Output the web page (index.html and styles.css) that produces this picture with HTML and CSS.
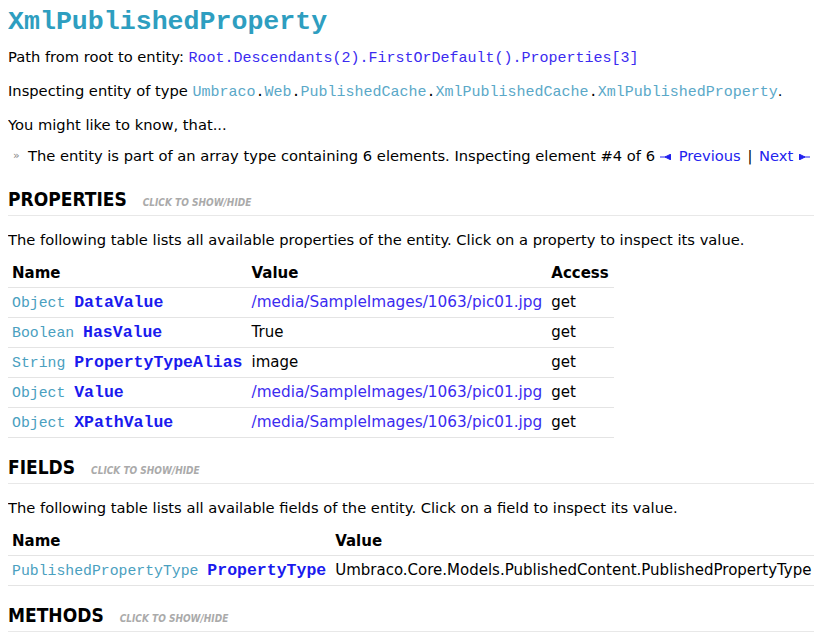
FILE: index.html
```html
<!DOCTYPE html>
<html lang="en">
<head>
  <meta charset="UTF-8" />
  <title>XmlPublishedProperty</title>
  <link rel="stylesheet" href="styles.css">
</head>
<body>
  <h1 class="entity-title">XmlPublishedProperty</h1>

  <p>Path from root to entity: <span class="path">Root.Descendants(2).FirstOrDefault().Properties[3]</span></p>

  <p>Inspecting entity of type <span class="type-name"><span class="ns">Umbraco</span>.<span class="ns">Web</span>.<span class="ns">PublishedCache</span>.<span class="ns">XmlPublishedCache</span>.<span class="ns">XmlPublishedProperty</span></span>.</p>

  <p class="know">You might like to know, that...</p>

  <ul class="notes">
    <li>
      The entity is part of an array type containing 6 elements. Inspecting element #4 of 6
      <a href="#" class="nav-link"><svg class="arrow prev" width="11" height="6" viewBox="0 0 11 6"><path d="M0 3h6M5 3l6-3v6z" stroke="currentColor" fill="currentColor"/></svg>Previous</a>
      <span class="sep">|</span>
      <a href="#" class="nav-link">Next<svg class="arrow next" width="11" height="6" viewBox="0 0 11 6"><path d="M5 3h6M0 0l6 3-6 3z" stroke="currentColor" fill="currentColor"/></svg></a>
    </li>
  </ul>

  <h2 class="section-title">PROPERTIES <span class="toggle">CLICK TO SHOW/HIDE</span></h2>
  <p class="intro">The following table lists all available properties of the entity. Click on a property to inspect its value.</p>

  <table class="members">
    <tr>
      <th>Name</th>
      <th>Value</th>
      <th>Access</th>
    </tr>
    <tr>
      <td><span class="member-type">Object </span><a href="#" class="member-name">DataValue</a></td>
      <td><a href="#" class="value-link">/media/SampleImages/1063/pic01.jpg</a></td>
      <td>get</td>
    </tr>
    <tr>
      <td><span class="member-type">Boolean </span><a href="#" class="member-name">HasValue</a></td>
      <td>True</td>
      <td>get</td>
    </tr>
    <tr>
      <td><span class="member-type">String </span><a href="#" class="member-name">PropertyTypeAlias</a></td>
      <td>image</td>
      <td>get</td>
    </tr>
    <tr>
      <td><span class="member-type">Object </span><a href="#" class="member-name">Value</a></td>
      <td><a href="#" class="value-link">/media/SampleImages/1063/pic01.jpg</a></td>
      <td>get</td>
    </tr>
    <tr>
      <td><span class="member-type">Object </span><a href="#" class="member-name">XPathValue</a></td>
      <td><a href="#" class="value-link">/media/SampleImages/1063/pic01.jpg</a></td>
      <td>get</td>
    </tr>
  </table>

  <h2 class="section-title">FIELDS <span class="toggle">CLICK TO SHOW/HIDE</span></h2>
  <p class="intro">The following table lists all available fields of the entity. Click on a field to inspect its value.</p>

  <table class="members">
    <tr>
      <th>Name</th>
      <th>Value</th>
    </tr>
    <tr>
      <td><span class="member-type">PublishedPropertyType </span><a href="#" class="member-name">PropertyType</a></td>
      <td>Umbraco.Core.Models.PublishedContent.PublishedPropertyType</td>
    </tr>
  </table>

  <h2 class="section-title">METHODS <span class="toggle">CLICK TO SHOW/HIDE</span></h2>
</body>
</html>
```

FILE: styles.css
```css
body {
  margin: 8px;
  font-family: "DejaVu Sans", sans-serif;
  font-size: 14.7px;
  line-height: 18px;
  color: #000;
  background: #fff;
}

a {
  text-decoration: none;
}

p {
  margin: 0 0 16px;
}

.entity-title {
  margin: 0 0 12px;
  font-family: "Liberation Mono", monospace;
  font-size: 26.6px;
  line-height: 28px;
  font-weight: bold;
  color: #2e9ec0;
}

.path,
.type-name {
  font-family: "Liberation Mono", monospace;
  font-size: 15px;
  line-height: 1;
}

.path {
  color: #3b2bf0;
}

.ns {
  color: #5aa8c8;
}

.know {
  margin-bottom: 13px;
}

.notes {
  list-style: none;
  margin: 0 0 22px;
  padding: 0;
}

.notes li {
  padding-left: 20px;
  position: relative;
}

.notes li::before {
  content: "\00BB";
  position: absolute;
  left: 5px;
  color: #888;
  font-size: 11px;
}

.nav-link {
  color: #2222ee;
}

.arrow {
  vertical-align: middle;
}

.arrow.prev {
  margin: 0 8px 0 0;
}

.arrow.next {
  margin: 0 0 0 6px;
}

.sep {
  margin: 0 2px;
}

.section-title {
  margin: 0 0 15px;
  padding-bottom: 0;
  border-bottom: 1px solid #e8e8e8;
  font-family: "DejaVu Sans Condensed", "DejaVu Sans", sans-serif;
  font-size: 19px;
  line-height: 24px;
  font-weight: bold;
  color: #000;
}

.toggle {
  margin-left: 10px;
  font-size: 10px;
  font-style: italic;
  font-weight: bold;
  color: #aaa;
}

.intro {
  margin-bottom: 10px;
}

.members {
  border-collapse: collapse;
  margin-bottom: 17px;
  font-size: 15px;
}

.members th {
  text-align: left;
  padding: 4px 5px 4px 4px;
  line-height: 20px;
  border-bottom: 1px solid #e4e4e4;
}

.members td {
  padding: 5px 5px 5px 4px;
  line-height: 19px;
  white-space: nowrap;
  border-bottom: 1px solid #e4e4e4;
}

.member-type,
.member-name {
  font-family: "Liberation Mono", monospace;
  line-height: 1;
}

.member-type {
  font-size: 14.8px;
  color: #4aa0c0;
}

.member-name {
  font-size: 16.5px;
  font-weight: bold;
  color: #1a1aee;
}

.value-link {
  font-size: 15.3px;
  color: #3b2bf0;
}
```
